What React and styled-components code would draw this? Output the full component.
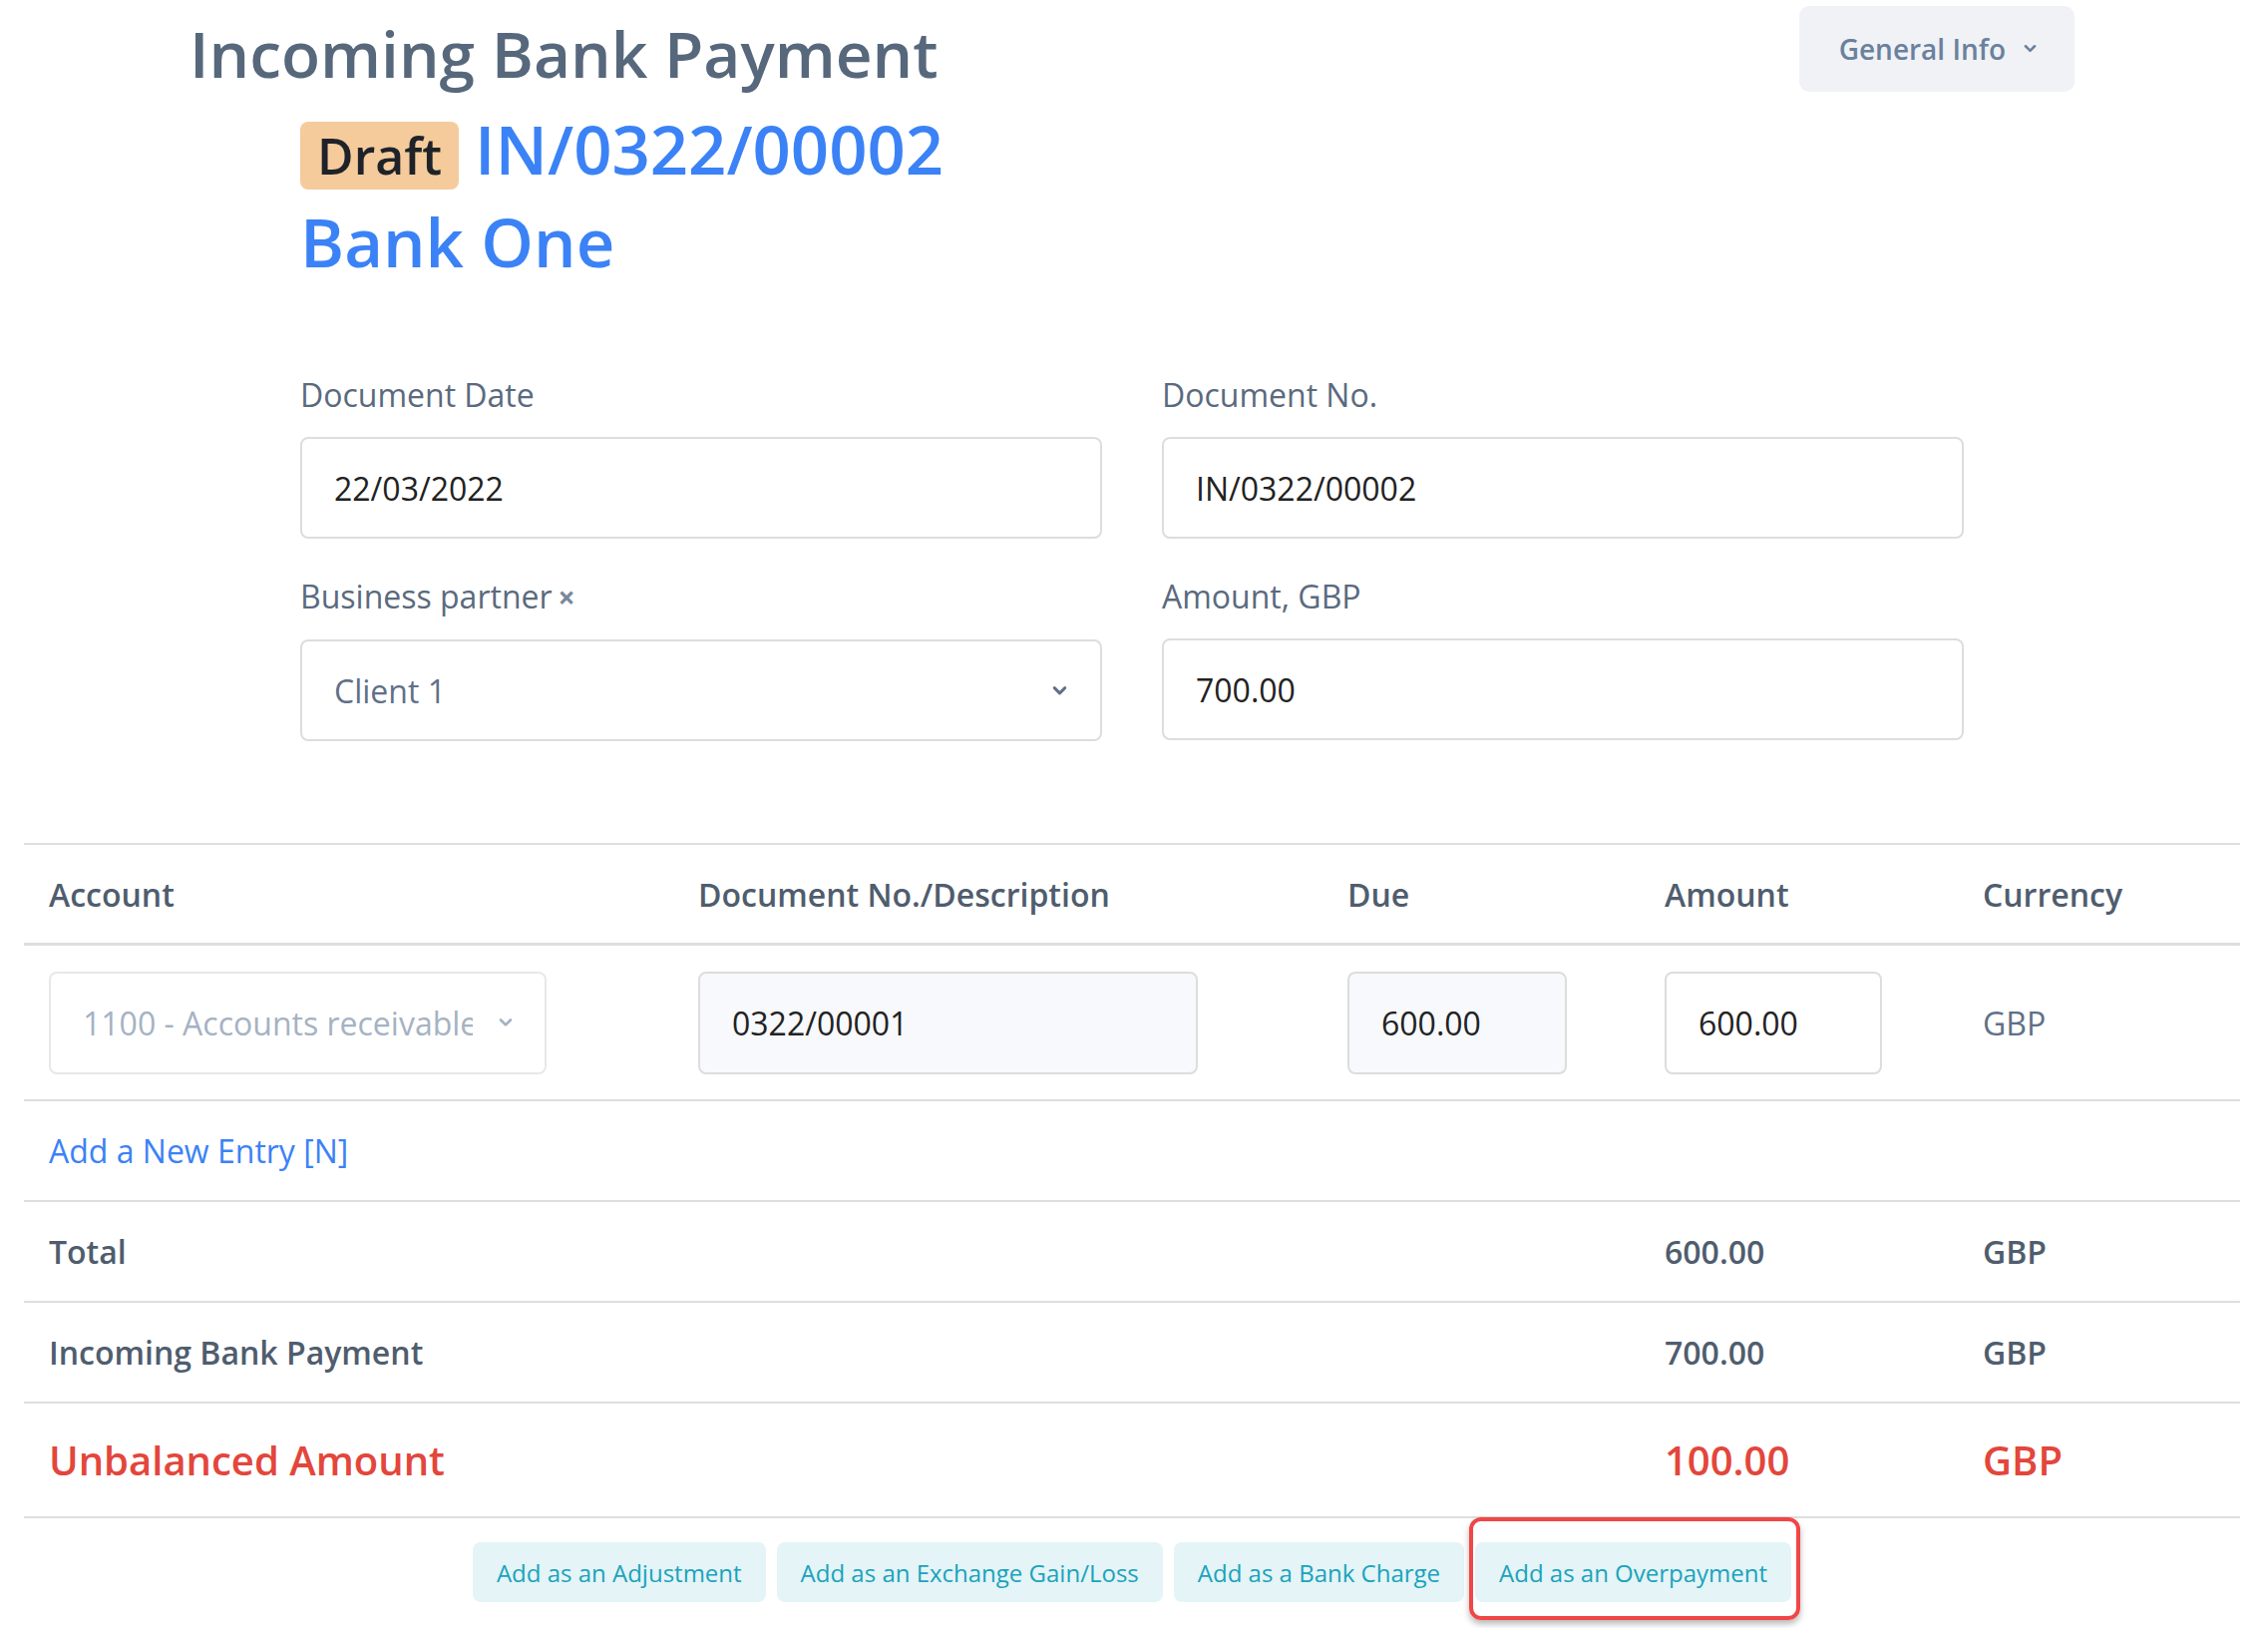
import styled, { createGlobalStyle, css } from 'styled-components';

const GlobalStyle = createGlobalStyle`
  html, body {
    margin: 0;
    padding: 0;
    background: #ffffff;
  }
  body {
    font-family: 'Open Sans', 'Noto Sans', 'Liberation Sans', sans-serif;
    color: #222;
  }
  * {
    box-sizing: border-box;
  }
`;

const Chevron = ({ size = 14, color = 'currentColor' }) => (
  <svg width={size} height={size * 0.7} viewBox="0 0 14 10" fill="none">
    <polyline
      points="2,2.5 7,7.5 12,2.5"
      stroke={color}
      strokeWidth="2.8"
      strokeLinecap="round"
      strokeLinejoin="round"
    />
  </svg>
);

const Page = styled.div`
  padding: 0 28px 40px 24px;
`;

const Header = styled.header`
  width: 1890px;
  margin: 0 auto;
  display: flex;
  justify-content: space-between;
  align-items: flex-start;
`;

const TitleBlock = styled.div`
  display: flex;
  flex-direction: column;
`;

const PageTitle = styled.h1`
  margin: 10px 0 0;
  font-size: 64px;
  line-height: 88px;
  font-weight: 600;
  color: #57687c;
`;

const DocLine = styled.div`
  display: flex;
  align-items: baseline;
  padding-left: 111px;
  margin-top: ${p => (p.$first ? '5px' : '0')};
`;

const Badge = styled.span`
  display: inline-block;
  background: #f5cb9c;
  color: #1f2329;
  font-size: 50px;
  line-height: 68px;
  font-weight: 600;
  padding: 0 17px;
  border-radius: 8px;
  margin-right: 16px;
`;

const DocNumber = styled.span`
  font-size: 67px;
  line-height: 93px;
  font-weight: 600;
  color: #3b82f6;
`;

const InfoButton = styled.button`
  margin-top: 6px;
  height: 86px;
  padding: 0 38px 0 40px;
  display: flex;
  align-items: center;
  gap: 18px;
  border: none;
  border-radius: 10px;
  background: #f0f2f5;
  color: #6a819e;
  font-family: inherit;
  font-size: 28px;
  font-weight: 600;
`;

const Form = styled.section`
  width: 1668px;
  margin: 86px auto 0;
  display: grid;
  grid-template-columns: 1fr 1fr;
  column-gap: 60px;
  row-gap: 37px;
`;

const Field = styled.div`
  display: flex;
  flex-direction: column;
`;

const Label = styled.label`
  font-size: 32px;
  line-height: 42px;
  color: #5a6a7e;
  margin-bottom: 21px;
  display: flex;
  align-items: baseline;
  gap: 6px;
`;

const Cross = styled.span`
  font-size: 30px;
  font-weight: 700;
  color: #7a889a;
`;

const boxBase = css`
  display: flex;
  align-items: center;
  height: ${p => p.$h || 102}px;
  border: 2px solid ${p => (p.$light ? '#e6e8ea' : '#dddddd')};
  border-radius: 8px;
  padding: 0 32px;
  font-size: 32px;
  color: #222;
  background: ${p => (p.$muted ? '#f7f9fc' : '#ffffff')};
`;

const InputBox = styled.div`
  ${boxBase}
  width: ${p => (p.$w ? `${p.$w}px` : '100%')};
`;

const SelectBox = styled.div`
  ${boxBase}
  width: ${p => (p.$w ? `${p.$w}px` : '100%')};
  justify-content: space-between;
  gap: ${p => p.$gap || 22}px;
  color: ${p => p.$color || '#5f7088'};
  padding: 0 ${p => p.$pr || 33}px 0 ${p => p.$pl || 32}px;
`;

const SelectText = styled.span`
  overflow: hidden;
  white-space: nowrap;
  flex: 1;
`;

const Table = styled.div`
  margin-top: 102px;
  border-top: 2px solid #dedede;
`;

const Row = styled.div`
  display: grid;
  grid-template-columns: 651px 651px 318px 319px 1fr;
  align-items: center;
  min-height: ${p => p.$h}px;
  border-bottom: ${p => (p.$thick ? 3 : 2)}px solid #dedede;
`;

const Cell = styled.div`
  padding-left: 25px;
  font-size: ${p => (p.$big ? 40 : 32)}px;
  font-weight: ${p => (p.$bold ? 600 : 400)};
  color: ${p => (p.$red ? '#e3463b' : p.$bold ? '#4f5d6e' : '#607086')};
`;

const HeadCell = styled(Cell)`
  font-weight: 600;
  color: #4f5d6e;
`;

const AddLink = styled.a`
  font-size: 32px;
  color: #3b82f6;
  text-decoration: none;
`;

const Actions = styled.div`
  display: flex;
  justify-content: center;
  gap: 11px;
  margin-top: 24px;
`;

const ActionButton = styled.button`
  position: relative;
  height: 60px;
  padding: 0 24px;
  border: none;
  border-radius: 8px;
  background: #e4f4f7;
  color: #1aa3bb;
  font-family: inherit;
  font-size: 24px;
`;

const Highlight = styled.span`
  position: absolute;
  top: -25px;
  bottom: -18px;
  left: -6px;
  right: -9px;
  border: 4px solid #f04646;
  border-radius: 12px;
  box-shadow: 0 4px 6px rgba(0, 0, 0, 0.28);
  pointer-events: none;
`;

const App = () => {
  const actions = [
    'Add as an Adjustment',
    'Add as an Exchange Gain/Loss',
    'Add as a Bank Charge',
    'Add as an Overpayment',
  ];

  return (
    <Page>
      <GlobalStyle />
      <Header>
        <TitleBlock>
          <PageTitle>Incoming Bank Payment</PageTitle>
          <DocLine $first>
            <Badge>Draft</Badge>
            <DocNumber>IN/0322/00002</DocNumber>
          </DocLine>
          <DocLine>
            <DocNumber>Bank One</DocNumber>
          </DocLine>
        </TitleBlock>
        <InfoButton>
          General Info <Chevron size={13} />
        </InfoButton>
      </Header>

      <Form>
        <Field>
          <Label>Document Date</Label>
          <InputBox>22/03/2022</InputBox>
        </Field>
        <Field>
          <Label>Document No.</Label>
          <InputBox>IN/0322/00002</InputBox>
        </Field>
        <Field>
          <Label>
            Business partner <Cross>×</Cross>
          </Label>
          <SelectBox>
            <SelectText>Client 1</SelectText>
            <Chevron size={15} color="#5f7088" />
          </SelectBox>
        </Field>
        <Field>
          <Label>Amount, GBP</Label>
          <InputBox>700.00</InputBox>
        </Field>
      </Form>

      <Table>
        <Row $h={101} $thick>
          <HeadCell>Account</HeadCell>
          <HeadCell>Document No./Description</HeadCell>
          <HeadCell>Due</HeadCell>
          <HeadCell>Amount</HeadCell>
          <HeadCell>Currency</HeadCell>
        </Row>
        <Row $h={156}>
          <Cell>
            <SelectBox $w={499} $h={103} $light $color="#a5b2c3" $pl={32} $pr={32} $gap={26}>
              <SelectText>1100 - Accounts receivable</SelectText>
              <Chevron size={14} color="#a5b2c3" />
            </SelectBox>
          </Cell>
          <Cell>
            <InputBox $w={501} $h={103} $muted>0322/00001</InputBox>
          </Cell>
          <Cell>
            <InputBox $w={220} $h={103} $muted>600.00</InputBox>
          </Cell>
          <Cell>
            <InputBox $w={218} $h={103}>600.00</InputBox>
          </Cell>
          <Cell>GBP</Cell>
        </Row>
        <Row $h={101}>
          <Cell>
            <AddLink href="#">Add a New Entry [N]</AddLink>
          </Cell>
        </Row>
        <Row $h={101}>
          <Cell $bold>Total</Cell>
          <Cell />
          <Cell />
          <Cell $bold>600.00</Cell>
          <Cell $bold>GBP</Cell>
        </Row>
        <Row $h={101}>
          <Cell $bold>Incoming Bank Payment</Cell>
          <Cell />
          <Cell />
          <Cell $bold>700.00</Cell>
          <Cell $bold>GBP</Cell>
        </Row>
        <Row $h={115}>
          <Cell $bold $big $red>Unbalanced Amount</Cell>
          <Cell />
          <Cell />
          <Cell $bold $big $red>100.00</Cell>
          <Cell $bold $big $red>GBP</Cell>
        </Row>
      </Table>

      <Actions>
        {actions.map((label, i) => (
          <ActionButton key={label}>
            {label}
            {i === actions.length - 1 && <Highlight />}
          </ActionButton>
        ))}
      </Actions>
    </Page>
  );
};

export default App;
